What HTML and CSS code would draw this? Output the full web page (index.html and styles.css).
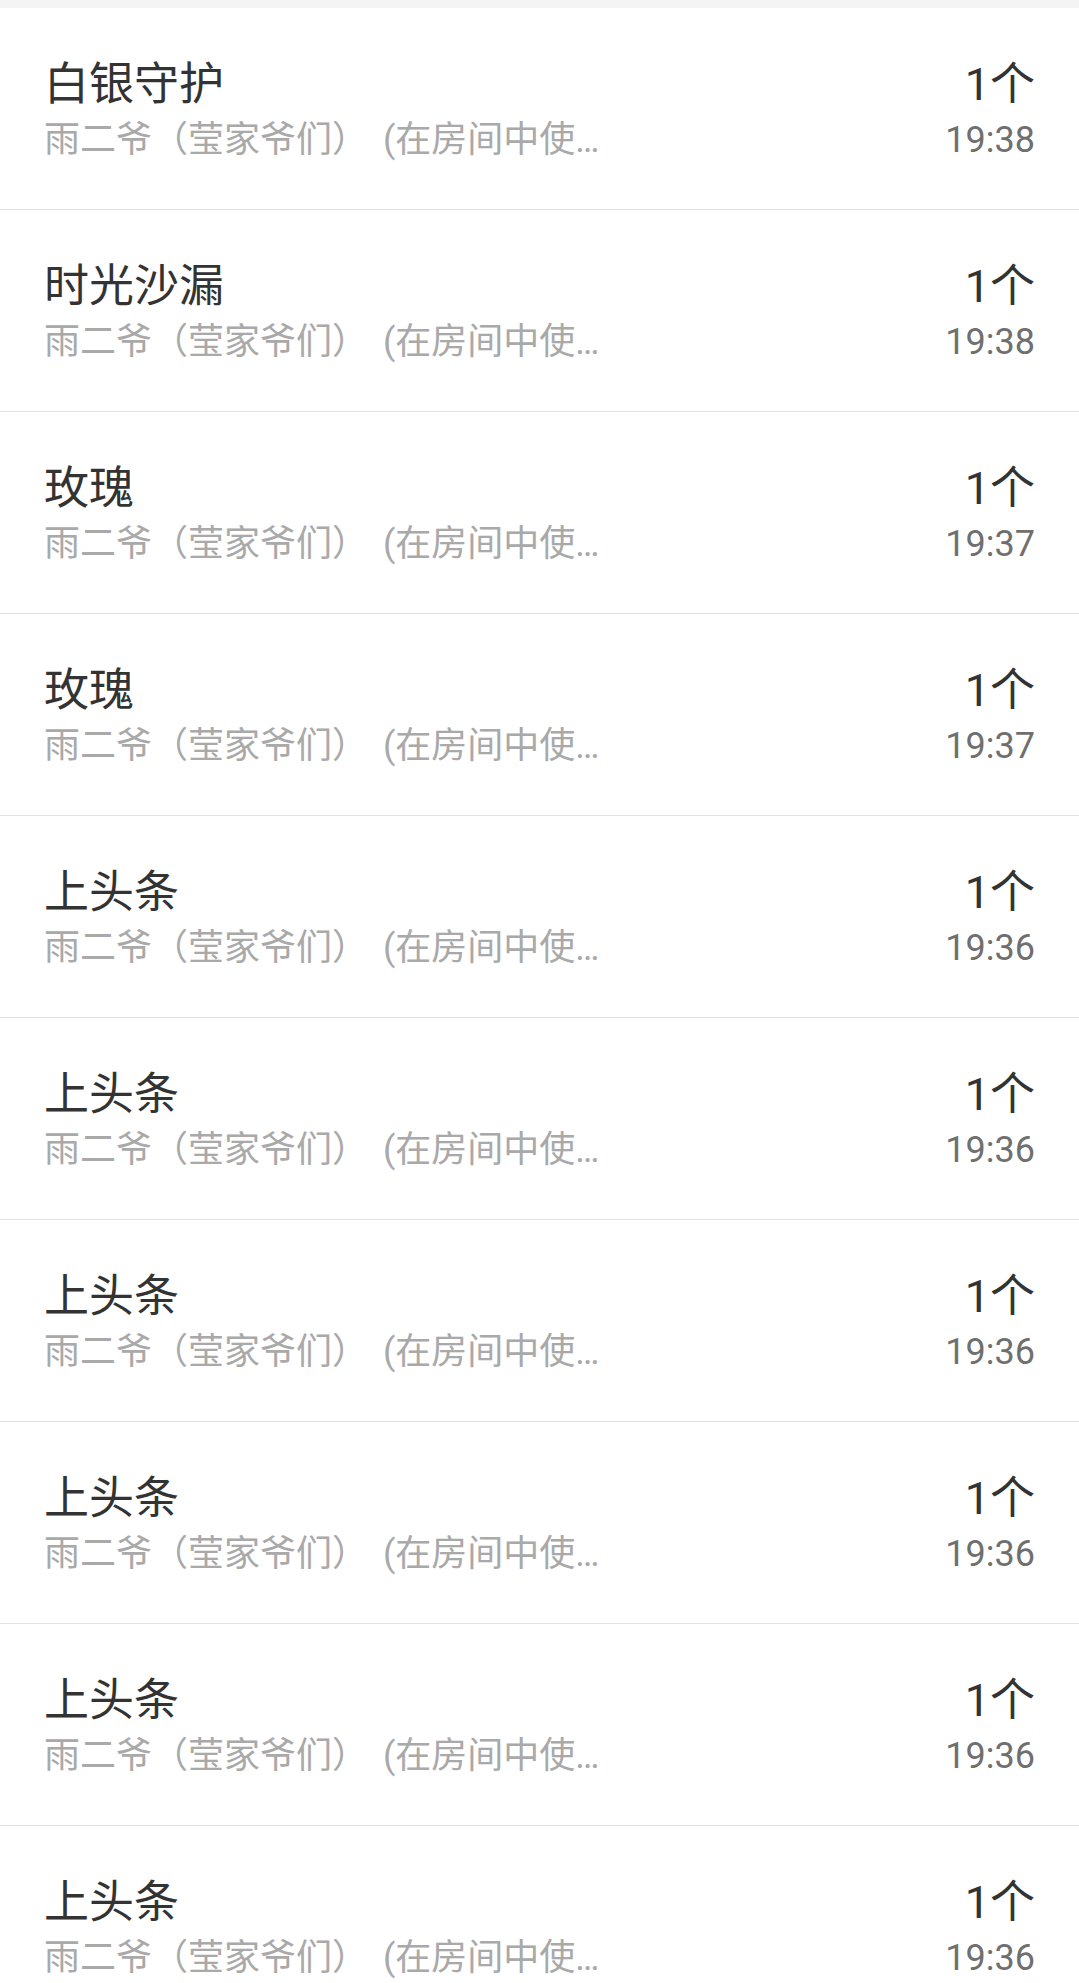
FILE: index.html
```html
<!doctype html>
<html lang="zh-CN">
  <head>
    <meta charset="utf-8">
    <meta name="viewport" content="width=device-width, initial-scale=1">
    <title>礼物记录</title>
    <link rel="stylesheet" href="styles.css">
  </head>
  <body>
    <div class="topbar"></div>

    <ul class="gifts">
      <li class="gift">
        <div class="gift-main">
          <div class="gift-name">白银守护</div>
          <div class="gift-from">雨二爷（莹家爷们） (在房间中使用了礼物)</div>
        </div>
        <div class="gift-side">
          <div class="gift-count">1个</div>
          <div class="gift-time">19:38</div>
        </div>
      </li>
      <li class="gift">
        <div class="gift-main">
          <div class="gift-name">时光沙漏</div>
          <div class="gift-from">雨二爷（莹家爷们） (在房间中使用了礼物)</div>
        </div>
        <div class="gift-side">
          <div class="gift-count">1个</div>
          <div class="gift-time">19:38</div>
        </div>
      </li>
      <li class="gift">
        <div class="gift-main">
          <div class="gift-name">玫瑰</div>
          <div class="gift-from">雨二爷（莹家爷们） (在房间中使用了礼物)</div>
        </div>
        <div class="gift-side">
          <div class="gift-count">1个</div>
          <div class="gift-time">19:37</div>
        </div>
      </li>
      <li class="gift">
        <div class="gift-main">
          <div class="gift-name">玫瑰</div>
          <div class="gift-from">雨二爷（莹家爷们） (在房间中使用了礼物)</div>
        </div>
        <div class="gift-side">
          <div class="gift-count">1个</div>
          <div class="gift-time">19:37</div>
        </div>
      </li>
      <li class="gift">
        <div class="gift-main">
          <div class="gift-name">上头条</div>
          <div class="gift-from">雨二爷（莹家爷们） (在房间中使用了礼物)</div>
        </div>
        <div class="gift-side">
          <div class="gift-count">1个</div>
          <div class="gift-time">19:36</div>
        </div>
      </li>
      <li class="gift">
        <div class="gift-main">
          <div class="gift-name">上头条</div>
          <div class="gift-from">雨二爷（莹家爷们） (在房间中使用了礼物)</div>
        </div>
        <div class="gift-side">
          <div class="gift-count">1个</div>
          <div class="gift-time">19:36</div>
        </div>
      </li>
      <li class="gift">
        <div class="gift-main">
          <div class="gift-name">上头条</div>
          <div class="gift-from">雨二爷（莹家爷们） (在房间中使用了礼物)</div>
        </div>
        <div class="gift-side">
          <div class="gift-count">1个</div>
          <div class="gift-time">19:36</div>
        </div>
      </li>
      <li class="gift">
        <div class="gift-main">
          <div class="gift-name">上头条</div>
          <div class="gift-from">雨二爷（莹家爷们） (在房间中使用了礼物)</div>
        </div>
        <div class="gift-side">
          <div class="gift-count">1个</div>
          <div class="gift-time">19:36</div>
        </div>
      </li>
      <li class="gift">
        <div class="gift-main">
          <div class="gift-name">上头条</div>
          <div class="gift-from">雨二爷（莹家爷们） (在房间中使用了礼物)</div>
        </div>
        <div class="gift-side">
          <div class="gift-count">1个</div>
          <div class="gift-time">19:36</div>
        </div>
      </li>
      <li class="gift">
        <div class="gift-main">
          <div class="gift-name">上头条</div>
          <div class="gift-from">雨二爷（莹家爷们） (在房间中使用了礼物)</div>
        </div>
        <div class="gift-side">
          <div class="gift-count">1个</div>
          <div class="gift-time">19:36</div>
        </div>
      </li>
    </ul>
  </body>
</html>
```

FILE: styles.css
```css
html, body
{
  margin: 0;
  padding: 0;
  border: 0;
}

body
{
  background-color: #ffffff;
  font-family: Roboto, "Noto Sans CJK SC", sans-serif;
  overflow-x: hidden;
}

.topbar
{
  height: 8px;
  background-color: #f4f4f4;
}

.gifts
{
  list-style: none;
  margin: 0;
  padding: 0;
}

.gift
{
  display: flex;
  justify-content: space-between;
  padding: 48px 44px 43px 44px;
  border-bottom: 1px solid #e2e2e2;
}

.gift-main
{
  min-width: 0;
}

.gift-name, .gift-count
{
  font-size: 45px;
  line-height: 58px;
  color: #333333;
  white-space: nowrap;
}

.gift-from, .gift-time
{
  font-size: 36px;
  line-height: 52px;
  white-space: nowrap;
}

.gift-from
{
  color: #a9a9a9;
  max-width: 575px;
  overflow: hidden;
  text-overflow: ellipsis;
  word-spacing: 6px;
}

.gift-side
{
  text-align: right;
}

.gift-time
{
  color: #6f6f6f;
}
```
